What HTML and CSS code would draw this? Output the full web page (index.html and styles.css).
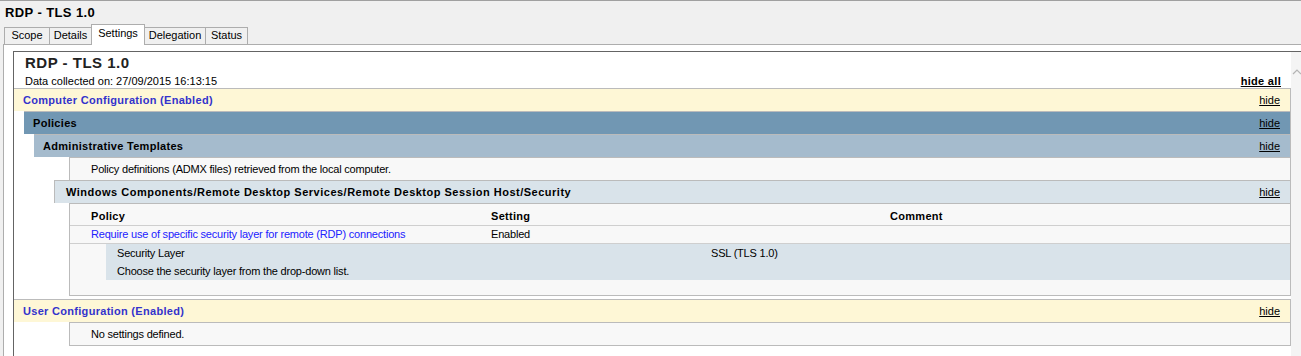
FILE: index.html
```html
<!DOCTYPE html>
<html lang="en">
  <head>
    <meta charset="UTF-8" />
    <title>RDP - TLS 1.0</title>
    <link rel="stylesheet" href="styles.css">
  </head>
  <body>
    <div class="window">
      <div class="wintitle">RDP - TLS 1.0</div>
      <div class="tabs">
        <span class="tab tab-scope">Scope</span>
        <span class="tab tab-details">Details</span>
        <span class="tab tab-settings active">Settings</span>
        <span class="tab tab-delegation">Delegation</span>
        <span class="tab tab-status">Status</span>
      </div>
      <div class="tabpage">
        <div class="frame">
          <div class="report">
            <div class="rtitle">RDP - TLS 1.0</div>
            <div class="rinfo">
              <span>Data collected on: 27/09/2015 16:13:15</span>
              <a class="hideall" href="#">hide all</a>
            </div>

            <div class="he he0"><span>Computer Configuration (Enabled)</span><a href="#">hide</a></div>
            <div class="he he1"><span>Policies</span><a href="#">hide</a></div>
            <div class="he he2"><span>Administrative Templates</span><a href="#">hide</a></div>
            <div class="info">Policy definitions (ADMX files) retrieved from the local computer.</div>
            <div class="he he3"><span>Windows Components/Remote Desktop Services/Remote Desktop Session Host/Security</span><a href="#">hide</a></div>
            <div class="policies">
              <div class="prow phead"><span>Policy</span><span>Setting</span><span>Comment</span></div>
              <div class="prow"><a class="plink" href="#">Require use of specific security layer for remote (RDP) connections</a><span>Enabled</span><span></span></div>
              <div class="subset">
                <div class="srow"><span>Security Layer</span><span>SSL (TLS 1.0)</span></div>
                <div class="srow"><span>Choose the security layer from the drop-down list.</span></div>
              </div>
            </div>

            <div class="he he0 user"><span>User Configuration (Enabled)</span><a href="#">hide</a></div>
            <div class="info empty">No settings defined.</div>
          </div>
          <div class="scrollbar">
            <svg width="17" height="10" viewBox="0 0 17 10">
              <polyline points="2,7 6,3 10,7" fill="none" stroke="#b4b4b4" stroke-width="1.2" />
            </svg>
          </div>
        </div>
      </div>
    </div>
  </body>
</html>
```

FILE: styles.css
```css
html, body {
  margin: 0;
  height: 356px;
  overflow: hidden;
}
body {
  background-color: #f0f0f0;
  font-family: "Liberation Sans", Arial, sans-serif;
  font-size: 11px;
  color: #000;
}
.window {
  border-top: 1px solid #a0a0a0;
}
.wintitle {
  padding: 4px 5px 0;
  height: 19px;
  font-size: 13px;
  line-height: 16px;
  font-weight: bold;
  letter-spacing: 0.4px;
}

/* tab strip */
.tabs {
  display: flex;
  align-items: flex-end;
  height: 20px;
  margin-left: 4px;
  position: relative;
  z-index: 1;
}
.tab {
  box-sizing: border-box;
  height: 17px;
  line-height: 15px;
  border: 1px solid #adadad;
  border-bottom: 0;
  background-color: #f0f0f0;
  text-align: center;
  margin-left: -1px;
}
.tab:first-child {
  margin-left: 0;
}
.tab.active {
  height: 21px;
  line-height: 17px;
  margin-bottom: -1px;
  background-color: #fff;
}
.tab-scope { width: 46px; }
.tab-details { width: 43px; }
.tab-settings { width: 54px; }
.tab-delegation { width: 62px; }
.tab-status { width: 43px; }

.tabpage {
  margin-left: 3px;
  margin-right: -30px;
  height: 305px;
  border: 1px solid #adadad;
  border-bottom: 0;
  background-color: #fff;
  padding: 6px 0 0 9px;
}
.frame {
  display: flex;
  height: 100%;
  box-sizing: border-box;
  border-top: 1px solid #646464;
  border-left: 1px solid #646464;
}
.report {
  flex: 0 0 1277px;
  background-color: #fff;
  letter-spacing: -0.2px;
}
.scrollbar {
  flex: 0 0 17px;
  background-color: #f4f4f4;
}
.scrollbar svg {
  display: block;
  margin-top: 15px;
}

/* report */
.rtitle {
  padding: 2px 0 0 11px;
  font-size: 15px;
  line-height: 18px;
  font-weight: bold;
  letter-spacing: 0.5px;
  color: #222;
}
.rinfo {
  display: flex;
  justify-content: space-between;
  padding: 2px 10px 0 11px;
  line-height: 14px;
  letter-spacing: 0;
}
.hideall {
  color: #000;
  font-weight: bold;
  letter-spacing: 0.3px;
}

.he {
  display: flex;
  justify-content: space-between;
  height: 22px;
  line-height: 22px;
  border-top: 1px solid #bbb;
  border-right: 1px solid #bbb;
  padding: 0 10px 0 9px;
  font-weight: bold;
  letter-spacing: 0.3px;
}
.he a {
  color: #000;
  font-weight: normal;
  letter-spacing: 0;
}
.he0 {
  background-color: #fef7d6;
  color: #3333cc;
}
.he0.user {
  margin-top: 3px;
}
.he1 {
  margin-left: 10px;
  background-color: #7197b3;
}
.he2 {
  margin-left: 20px;
  background-color: #a5bbcd;
}
.he3 {
  margin-left: 40px;
  padding-left: 11px;
  border-left: 1px solid #bbb;
  background-color: #d9e3ea;
  letter-spacing: 0.5px;
}

.info {
  margin-left: 55px;
  height: 22px;
  line-height: 22px;
  padding-left: 21px;
  border: 1px solid #bbb;
  border-bottom: 0;
  background-color: #f8f8f8;
}
.info.empty {
  border-bottom: 1px solid #bbb;
}

.policies {
  margin-left: 55px;
  padding-bottom: 15px;
  border: 1px solid #bbb;
  background-color: #f8f8f8;
}
.prow {
  display: grid;
  grid-template-columns: 400px 399px 1fr;
  padding-left: 21px;
  line-height: 17px;
  border-bottom: 1px solid #cfcfcf;
}
.phead {
  padding-top: 3px;
  line-height: 18px;
  font-weight: bold;
  letter-spacing: 0.3px;
}
.plink {
  color: #2121ff;
  text-decoration: none;
}
.subset {
  margin-left: 36px;
  background-color: #d9e3ea;
}
.srow {
  display: grid;
  grid-template-columns: 594px 1fr;
  padding-left: 11px;
  line-height: 18px;
}
```
